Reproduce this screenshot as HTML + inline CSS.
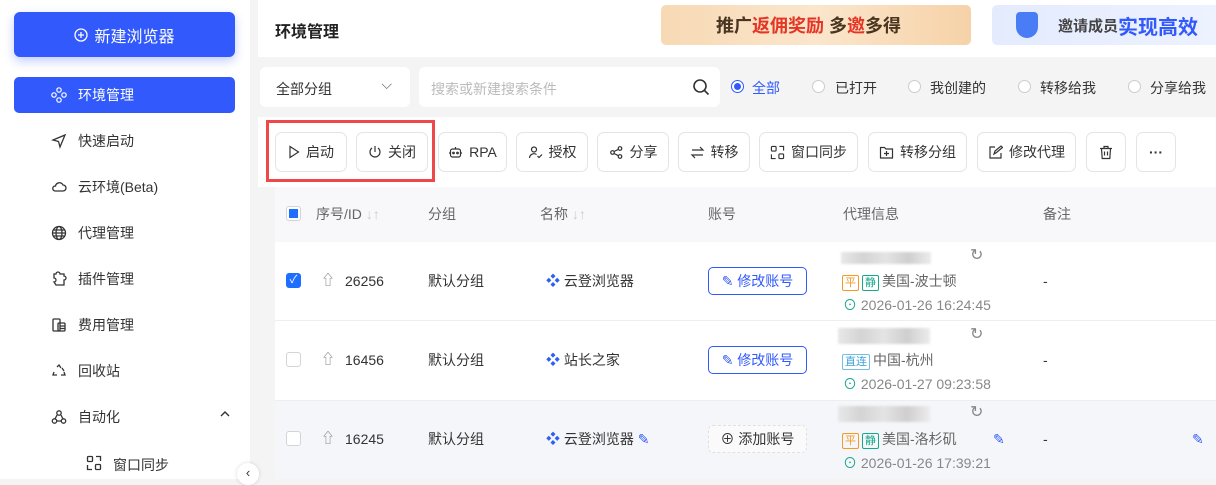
<!DOCTYPE html>
<html><head><meta charset="utf-8"><style>
*{box-sizing:border-box;margin:0;padding:0}
body{width:1216px;height:479px;overflow:hidden;background:#f4f4f5;font-family:"Liberation Sans","Noto Sans CJK SC",sans-serif;font-size:14px;color:#333;position:relative}
.abs{position:absolute}
.side{left:0;top:0;width:250px;height:479px;background:#fff}
.newbtn{left:14px;top:12px;width:221px;height:45px;background:#3159fb;border-radius:6px;color:#fff;font-size:16px;display:flex;align-items:center;justify-content:center;gap:6px;box-shadow:0 4px 10px rgba(49,89,251,.3)}
.nav{left:14px;width:221px;height:36px;display:flex;align-items:center;padding-left:36px;font-size:14px;color:#333;border-radius:5px}
.nav svg{position:absolute;left:37px;top:10px}
.nav span{margin-left:28px}
.active{background:#3159fb;color:#fff}
.card{background:#fff}
.btn{position:absolute;top:132px;height:40px;border:1px solid #e4e4e7;border-radius:7px;background:#fff;display:flex;align-items:center;justify-content:center;gap:6px;font-size:14px;color:#333}
.radio{position:absolute;top:80px;width:13px;height:13px;border:1px solid #ccc;border-radius:50%;background:#fff}
.rl{position:absolute;top:78px;font-size:14px;color:#333}
.cell{position:absolute;font-size:14px;color:#333;line-height:16px}
.cb{position:absolute;left:286px;width:15px;height:15px;border:1px solid #d4d4d8;border-radius:3px;background:#fff}
.tag{display:inline-block;font-size:11px;border:1px solid;border-radius:2px;padding:0 2px;line-height:14px;margin-right:3px}
.o{color:#f59a23;border-color:#f59a23}.g{color:#17a88c;border-color:#17a88c}.b{color:#3aa3d8;border-color:#74bde3}
.blur{position:absolute;height:12px;width:60px;background:linear-gradient(90deg,#e8e8e8,#d4d4d4,#e4e4e4,#cfcfcf,#ececec);filter:blur(1px)}
.gray{color:#888}
.acct{position:absolute;left:708px;width:99px;height:28px;border:1px solid #3159fb;border-radius:5px;color:#3159fb;display:flex;align-items:center;justify-content:center;gap:4px;font-size:14px}
</style></head><body>
<div class="abs side"></div>
<div class="abs newbtn"><svg width="14" height="14" viewBox="0 0 14 14"><circle cx="7" cy="7" r="6" fill="none" stroke="#fff" stroke-width="1.3"/><path d="M7 4v6M4 7h6" stroke="#fff" stroke-width="1.3"/></svg>新建浏览器</div>
<div class="abs nav active" style="top:77px"><svg width="16" height="16" viewBox="0 0 16 16" fill="none" stroke="#fff" stroke-width="1.2"><circle cx="8" cy="3" r="2.2"/><circle cx="8" cy="13" r="2.2"/><circle cx="3" cy="8" r="2.2"/><circle cx="13" cy="8" r="2.2"/></svg><span>环境管理</span></div>
<div class="abs nav" style="top:123px"><svg width="16" height="16" viewBox="0 0 16 16" fill="none" stroke="#333" stroke-width="1.3"><path d="M2 7L14 2 9 14 7.5 8.5z"/></svg><span>快速启动</span></div>
<div class="abs nav" style="top:169px"><svg width="16" height="16" viewBox="0 0 16 16" fill="none" stroke="#333" stroke-width="1.3"><path d="M4 12h8a3 3 0 000-6 4 4 0 00-7.5 1A2.5 2.5 0 004 12z"/></svg><span>云环境(Beta)</span></div>
<div class="abs nav" style="top:215px"><svg width="16" height="16" viewBox="0 0 16 16" fill="none" stroke="#333" stroke-width="1.3"><circle cx="8" cy="8" r="6.5"/><ellipse cx="8" cy="8" rx="3" ry="6.5"/><path d="M1.5 8h13M2.5 5h11M2.5 11h11"/></svg><span>代理管理</span></div>
<div class="abs nav" style="top:261px"><svg width="16" height="16" viewBox="0 0 16 16" fill="none" stroke="#333" stroke-width="1.3"><path d="M5 14H13V9a2 2 0 000-4V3H9a2 2 0 00-4 0H3v4a2 2 0 010 4z"/></svg><span>插件管理</span></div>
<div class="abs nav" style="top:307px"><svg width="16" height="16" viewBox="0 0 16 16" fill="none" stroke="#333" stroke-width="1.3"><rect x="2" y="2" width="7" height="12" rx="1"/><rect x="7" y="6" width="7" height="8" rx="1"/><path d="M9 9h5M9 11.5h5"/></svg><span>费用管理</span></div>
<div class="abs nav" style="top:353px"><svg width="16" height="16" viewBox="0 0 16 16" fill="none" stroke="#333" stroke-width="1.3"><path d="M6 4l2-2 2 3M3 9l-1 3h4M13 9l1 3h-4M11 5l2 3"/></svg><span>回收站</span></div>
<div class="abs nav" style="top:399px"><svg width="16" height="16" viewBox="0 0 16 16" fill="none" stroke="#333" stroke-width="1.3"><circle cx="8" cy="4" r="2.2"/><circle cx="3.5" cy="12" r="2.2"/><circle cx="12.5" cy="12" r="2.2"/><path d="M6 6l-2 4M10 6l2 4M6 12h4"/></svg><span>自动化</span></div>
<svg class="abs" style="left:220px;top:410px" width="10" height="8" viewBox="0 0 10 8" fill="none" stroke="#333" stroke-width="1.4"><path d="M1 6l4-4 4 4"/></svg>
<div class="abs" style="left:86px;top:455px;width:16px;height:16px"><svg width="16" height="16" viewBox="0 0 16 16" fill="none" stroke="#333" stroke-width="1.3"><rect x="1.5" y="1.5" width="5" height="5" rx="1"/><rect x="9.5" y="9.5" width="5" height="5" rx="1"/><path d="M10 1.5h4.5V6M1.5 10v4.5H6"/></svg></div>
<div class="abs" style="left:113px;top:455px;font-size:14px">窗口同步</div>
<div class="abs" style="left:237px;top:463px;width:22px;height:22px;border-radius:50%;background:#fff;box-shadow:0 0 4px rgba(0,0,0,.15);font-size:13px;text-align:center;line-height:20px">‹</div>

<div class="abs card" style="left:258px;top:0;width:958px;height:57px"></div>
<div class="abs" style="left:275px;top:18px;font-size:16px;font-weight:bold;color:#222">环境管理</div>
<div class="abs" style="left:661px;top:5px;width:310px;height:40px;border-radius:5px;background:linear-gradient(90deg,#f7d9b4,#fbe6cc,#f6d2a8);display:flex;align-items:center;padding-left:55px;font-size:18px;font-weight:bold;color:#4a3520">推广<span style="color:#e53525">返佣奖励</span>&nbsp;多<span style="color:#e53525">邀</span>多得</div>
<div class="abs" style="left:992px;top:5px;width:230px;height:40px;border-radius:5px;background:linear-gradient(90deg,#e3ebfd,#eef2ff);display:flex;align-items:center;padding-left:66px;font-size:15px;font-weight:bold;color:#444;white-space:nowrap">邀请成员<span style="color:#3159fb;font-size:20px">实现高效</span></div>
<div class="abs" style="left:1016px;top:12px;width:22px;height:26px;border-radius:4px 4px 11px 11px;background:#4a7cf5"></div>

<div class="abs card" style="left:260px;top:67px;width:150px;height:40px;border-radius:6px;padding:12px 16px;font-size:14px">全部分组<span style="position:absolute;right:18px;top:9px;color:#666">⌵</span></div>
<div class="abs card" style="left:419px;top:67px;width:301px;height:40px;border-radius:6px;padding:12px 12px;font-size:14px;color:#bbb">搜索或新建搜索条件<svg style="position:absolute;right:10px;top:11px" width="18" height="18" viewBox="0 0 18 18" fill="none" stroke="#333" stroke-width="1.6"><circle cx="8" cy="8" r="6"/><path d="M12.5 12.5l4 4"/></svg></div>
<div class="radio" style="left:731px;border-color:#3159fb"><div style="width:7px;height:7px;border-radius:50%;background:#3159fb;margin:2px"></div></div><div class="rl" style="left:752px;color:#3159fb">全部</div>
<div class="radio" style="left:812px"></div><div class="rl" style="left:835px">已打开</div>
<div class="radio" style="left:908px"></div><div class="rl" style="left:930px">我创建的</div>
<div class="radio" style="left:1018px"></div><div class="rl" style="left:1040px">转移给我</div>
<div class="radio" style="left:1128px"></div><div class="rl" style="left:1150px">分享给我</div>

<div class="abs card" style="left:258px;top:117px;width:958px;height:70px"></div>
<div class="abs" style="left:266px;top:120px;width:169px;height:62px;border:3px solid #f0484a"></div>
<div class="btn" style="left:275px;width:72px"><svg width="12" height="14" viewBox="0 0 12 14" fill="none" stroke="#333" stroke-width="1.2"><path d="M2 1.5v11l8.5-5.5z"/></svg>启动</div>
<div class="btn" style="left:356px;width:72px"><svg width="14" height="14" viewBox="0 0 14 14" fill="none" stroke="#333" stroke-width="1.2"><path d="M7 1v6M4 3a5 5 0 106 0"/></svg>关闭</div>
<div class="btn" style="left:438px;width:69px"><svg width="15" height="15" viewBox="0 0 15 15" fill="none" stroke="#333" stroke-width="1.2"><rect x="2.5" y="4" width="10" height="8" rx="2"/><path d="M7.5 2v2M1 8h1.5M12.5 8H14"/><circle cx="5.5" cy="8" r=".8"/><circle cx="9.5" cy="8" r=".8"/></svg>RPA</div>
<div class="btn" style="left:516px;width:72px"><svg width="15" height="15" viewBox="0 0 15 15" fill="none" stroke="#333" stroke-width="1.2"><circle cx="6" cy="4.5" r="2.5"/><path d="M1.5 13a4.5 4.5 0 017-3.5M9.5 11l1.5 1.5 3-3"/></svg>授权</div>
<div class="btn" style="left:597px;width:72px"><svg width="15" height="15" viewBox="0 0 15 15" fill="none" stroke="#333" stroke-width="1.2"><circle cx="3.5" cy="7.5" r="1.8"/><circle cx="11" cy="3.5" r="1.8"/><circle cx="11" cy="11.5" r="1.8"/><path d="M5 6.5l4.5-2.2M5 8.5l4.5 2.2"/></svg>分享</div>
<div class="btn" style="left:678px;width:72px"><svg width="15" height="15" viewBox="0 0 15 15" fill="none" stroke="#333" stroke-width="1.2"><path d="M2 5h11l-3-3M13 10H2l3 3"/></svg>转移</div>
<div class="btn" style="left:759px;width:99px"><svg width="15" height="15" viewBox="0 0 16 16" fill="none" stroke="#333" stroke-width="1.2"><rect x="1.5" y="1.5" width="5" height="5" rx="1"/><rect x="9.5" y="9.5" width="5" height="5" rx="1"/><path d="M10 1.5h4.5V6M1.5 10v4.5H6"/></svg>窗口同步</div>
<div class="btn" style="left:868px;width:99px"><svg width="15" height="15" viewBox="0 0 15 15" fill="none" stroke="#333" stroke-width="1.2"><path d="M1.5 2.5h4l1.5 1.5h6.5v9h-12z"/><path d="M7.5 6v5M5 8.5h5"/></svg>转移分组</div>
<div class="btn" style="left:977px;width:99px"><svg width="15" height="15" viewBox="0 0 15 15" fill="none" stroke="#333" stroke-width="1.2"><path d="M7 2H2v11h11V8M6 9l1-3 6-5 1.5 1.5-6 5z"/></svg>修改代理</div>
<div class="btn" style="left:1086px;width:40px"><svg width="14" height="15" viewBox="0 0 14 15" fill="none" stroke="#333" stroke-width="1.2"><path d="M1 3.5h12M5 3.5V1.5h4v2M2.5 3.5l.7 10h7.6l.7-10M5.5 6.5v4M8.5 6.5v4"/></svg></div>
<div class="btn" style="left:1136px;width:40px;font-weight:bold">···</div>

<div class="abs" style="left:275px;top:187px;width:941px;height:55px;background:#f8f8fa"></div>
<div class="cb" style="top:206px"><div style="width:9px;height:9px;background:#1e6fff;margin:2px"></div></div>
<div class="cell gray" style="left:316px;top:206px;color:#666">序号/ID <span style="color:#ccc">↓↑</span></div>
<div class="cell" style="left:428px;top:206px;color:#666">分组</div>
<div class="cell" style="left:540px;top:206px;color:#666">名称 <span style="color:#ccc">↓↑</span></div>
<div class="cell" style="left:708px;top:206px;color:#666">账号</div>
<div class="cell" style="left:843px;top:206px;color:#666">代理信息</div>
<div class="cell" style="left:1043px;top:206px;color:#666">备注</div>

<div class="abs card" style="left:275px;top:242px;width:941px;height:158px"></div>
<div class="abs" style="left:275px;top:320px;width:941px;height:1px;background:#eee"></div>
<div class="abs" style="left:275px;top:400px;width:941px;height:79px;background:#f5f6fa;border-top:1px solid #eee"></div>

<!-- row1 -->
<div class="cb" style="top:273px;background:#1e6fff;border-color:#1e6fff;color:#fff;font-size:11px;text-align:center;line-height:13px">✓</div>
<div class="cell gray" style="left:321px;top:272px">⇧</div><div class="cell" style="left:345px;top:273px">26256</div>
<div class="cell" style="left:428px;top:273px">默认分组</div>
<div class="cell" style="left:546px;top:273px"><span style="color:#2f5ff0">❖</span> 云登浏览器</div>
<div class="acct" style="top:267px">✎ 修改账号</div>
<div class="blur" style="left:841px;top:252px;width:90px"></div>
<div class="cell gray" style="left:970px;top:248px;font-size:16px">↻</div>
<div class="cell" style="left:842px;top:273px;color:#666"><span class="tag o">平</span><span class="tag g">静</span>美国-波士顿</div>
<div class="cell" style="left:843px;top:297px;color:#888"><span style="color:#17a88c">⊙</span> 2026-01-26 16:24:45</div>
<div class="cell" style="left:1043px;top:273px">-</div>
<!-- row2 -->
<div class="cb" style="top:352px"></div>
<div class="cell gray" style="left:321px;top:351px">⇧</div><div class="cell" style="left:345px;top:352px">16456</div>
<div class="cell" style="left:428px;top:352px">默认分组</div>
<div class="cell" style="left:546px;top:352px"><span style="color:#2f5ff0">❖</span> 站长之家</div>
<div class="acct" style="top:346px">✎ 修改账号</div>
<div class="blur" style="left:838px;top:328px;width:92px;height:16px"></div>
<div class="cell gray" style="left:970px;top:327px;font-size:16px">↻</div>
<div class="cell" style="left:842px;top:352px;color:#666"><span class="tag b">直连</span>中国-杭州</div>
<div class="cell" style="left:843px;top:376px;color:#888"><span style="color:#17a88c">⊙</span> 2026-01-27 09:23:58</div>
<div class="cell" style="left:1043px;top:352px">-</div>
<!-- row3 -->
<div class="cb" style="top:431px"></div>
<div class="cell gray" style="left:321px;top:430px">⇧</div><div class="cell" style="left:345px;top:431px">16245</div>
<div class="cell" style="left:428px;top:431px">默认分组</div>
<div class="cell" style="left:546px;top:431px"><span style="color:#2f5ff0">❖</span> 云登浏览器 <span style="color:#3159fb">✎</span></div>
<div class="acct" style="top:425px;border:1px dashed #e0e0e0;background:#fafafb;color:#333">⊕ 添加账号</div>
<div class="blur" style="left:838px;top:406px;width:92px;height:16px"></div>
<div class="cell gray" style="left:970px;top:405px;font-size:16px">↻</div>
<div class="cell" style="left:842px;top:431px;color:#666"><span class="tag o">平</span><span class="tag g">静</span>美国-洛杉矶</div>
<div class="cell" style="left:993px;top:431px;color:#3159fb">✎</div>
<div class="cell" style="left:843px;top:455px;color:#888"><span style="color:#17a88c">⊙</span> 2026-01-26 17:39:21</div>
<div class="cell" style="left:1043px;top:431px">-</div>
<div class="cell" style="left:1192px;top:431px;color:#3159fb">✎</div>
</body></html>
